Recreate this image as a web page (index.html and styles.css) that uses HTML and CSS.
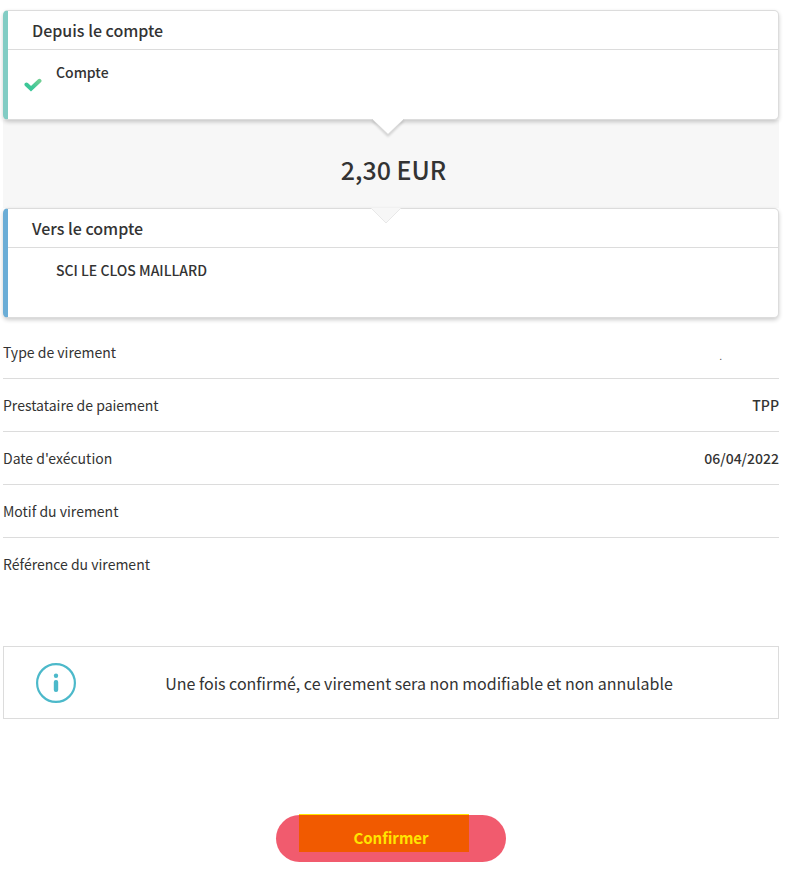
FILE: index.html
```html
<!DOCTYPE html>
<html lang="fr">
<head>
    <meta charset="UTF-8">
    <meta name="viewport" content="width=device-width, initial-scale=1.0">
    <title>Confirmation du virement</title>
    <link rel="stylesheet" href="styles.css">
</head>
<body>

    <main class="transfer">
        <section class="account account-from">
            <h2 class="account-title">Depuis le compte</h2>
            <div class="account-body">
                <svg class="check" viewBox="0 0 18 14" aria-hidden="true">
                    <defs>
                        <linearGradient id="checkFill" x1="0" y1="1" x2="1" y2="0">
                            <stop offset="0.3" stop-color="#3cc798"/>
                            <stop offset="1" stop-color="#6fce94"/>
                        </linearGradient>
                    </defs>
                    <path d="M2.5 6.5 L7 10.8 L15.5 2.8" fill="none" stroke="url(#checkFill)" stroke-width="4" stroke-linecap="round"/>
                </svg>
                <p class="account-name">Compte</p>
            </div>
            <svg class="arrow arrow-from" viewBox="0 0 32 20" aria-hidden="true">
                <path d="M0 0 L16 15.5 L32 0 Z" fill="#fff"/>
                <path d="M0 0 L16 15.5 L32 0" fill="none" stroke="#d6d6d6"/>
            </svg>
        </section>

        <p class="amount">2,30 EUR</p>

        <section class="account account-to">
            <svg class="arrow arrow-to" viewBox="0 0 32 20" aria-hidden="true">
                <path d="M1 0 L16 15 L31 0 Z" fill="#f7f7f7"/>
                <path d="M1 0 L16 15 L31 0" fill="none" stroke="#e8e8e8"/>
            </svg>
            <h2 class="account-title">Vers le compte</h2>
            <div class="account-body">
                <p class="account-name">SCI LE CLOS MAILLARD</p>
            </div>
        </section>

        <dl class="details">
            <div class="row">
                <dt>Type de virement</dt>
                <dd class="masked">.</dd>
            </div>
            <div class="row">
                <dt>Prestataire de paiement</dt>
                <dd>TPP</dd>
            </div>
            <div class="row">
                <dt>Date d'exécution</dt>
                <dd>06/04/2022</dd>
            </div>
            <div class="row">
                <dt>Motif du virement</dt>
                <dd></dd>
            </div>
            <div class="row">
                <dt>Référence du virement</dt>
                <dd></dd>
            </div>
        </dl>

        <div class="notice">
            <svg class="info" viewBox="0 0 40 40" aria-hidden="true">
                <circle cx="20" cy="20" r="18.9" fill="none" stroke="#4cb9ca" stroke-width="2.2"/>
                <circle cx="20" cy="12.7" r="2.2" fill="#4cb9ca"/>
                <rect x="17.8" y="17" width="4.4" height="12" rx="2" fill="#4cb9ca"/>
            </svg>
            <p class="notice-text">Une fois confirmé, ce virement sera non modifiable et non annulable</p>
        </div>

        <button type="button" class="confirm"><span class="confirm-label">Confirmer</span></button>
    </main>

</body>
</html>
```
FILE: styles.css
```css
* {
    box-sizing: border-box;
}
body {
    margin: 0;
    padding: 10px 9px 10px 3px;
    font-family: "Noto Sans CJK SC", "Noto Sans", sans-serif;
    font-size: 14px;
    line-height: 20px;
    color: #333;
    background: #fff;
}
h2, p, dl, dd {
    margin: 0;
}
.transfer {
    display: flex;
    flex-direction: column;
}
.account {
    position: relative;
    min-height: 110px;
    background: #fff;
    border: 1px solid #dcdcdc;
    border-left-width: 5px;
    border-radius: 5px;
    box-shadow: 0 2px 4px rgba(0, 0, 0, 0.2);
}
.account-from {
    border-left-color: #82ccc4;
}
.account-to {
    border-left-color: #6badd6;
}
.account-title {
    padding: 7px 24px;
    border-bottom: 1px solid #dcdcdc;
    font-size: 16px;
    line-height: 24px;
    font-weight: 500;
}
.account-body {
    position: relative;
    padding: 12px 48px;
}
.account-name {
    font-weight: 500;
}
.check {
    position: absolute;
    left: 16px;
    top: 28px;
    width: 18px;
    height: 14px;
}
.arrow {
    position: absolute;
    width: 32px;
    height: 20px;
}
.arrow-from {
    top: 108px;
    left: calc(50% - 21px);
    filter: drop-shadow(0 2px 1px rgba(0, 0, 0, 0.15));
}
.arrow-to {
    top: -1px;
    left: calc(50% - 23px);
}
.amount {
    padding: 31px 0 21px 5px;
    background: #f7f7f7;
    font-size: 25px;
    line-height: 36px;
    font-weight: 500;
    text-align: center;
}
.details {
    padding-top: 8px;
}
.row {
    display: flex;
    justify-content: space-between;
    padding: 16px 0;
    border-bottom: 1px solid #dcdcdc;
}
.row:last-child {
    border-bottom: none;
}
.row dd {
    font-weight: 500;
}
.row .masked {
    align-self: flex-end;
    padding-right: 57px;
    font-size: 8px;
    line-height: 10px;
}
.notice {
    display: flex;
    align-items: center;
    margin-top: 56px;
    padding: 16px 16px 15px 32px;
    border: 1px solid #dcdcdc;
}
.info {
    flex: none;
    width: 40px;
    height: 40px;
}
.notice-text {
    flex: 1;
    padding-bottom: 1px;
    font-size: 16px;
    line-height: 24px;
    text-align: center;
}
.confirm {
    position: relative;
    align-self: center;
    width: 230px;
    height: 47px;
    margin-top: 96px;
    padding: 0 0 2px;
    border: none;
    border-radius: 24px;
    background: #f15b6e;
    color: #ffe500;
    font: inherit;
    font-size: 15px;
    font-weight: 700;
    cursor: pointer;
}
.confirm::before {
    content: "";
    position: absolute;
    top: -1px;
    left: 23px;
    width: 170px;
    height: 37px;
    background: #f15a00;
    border-top: 1px solid #ffe500;
}
.confirm-label {
    position: relative;
}
```
